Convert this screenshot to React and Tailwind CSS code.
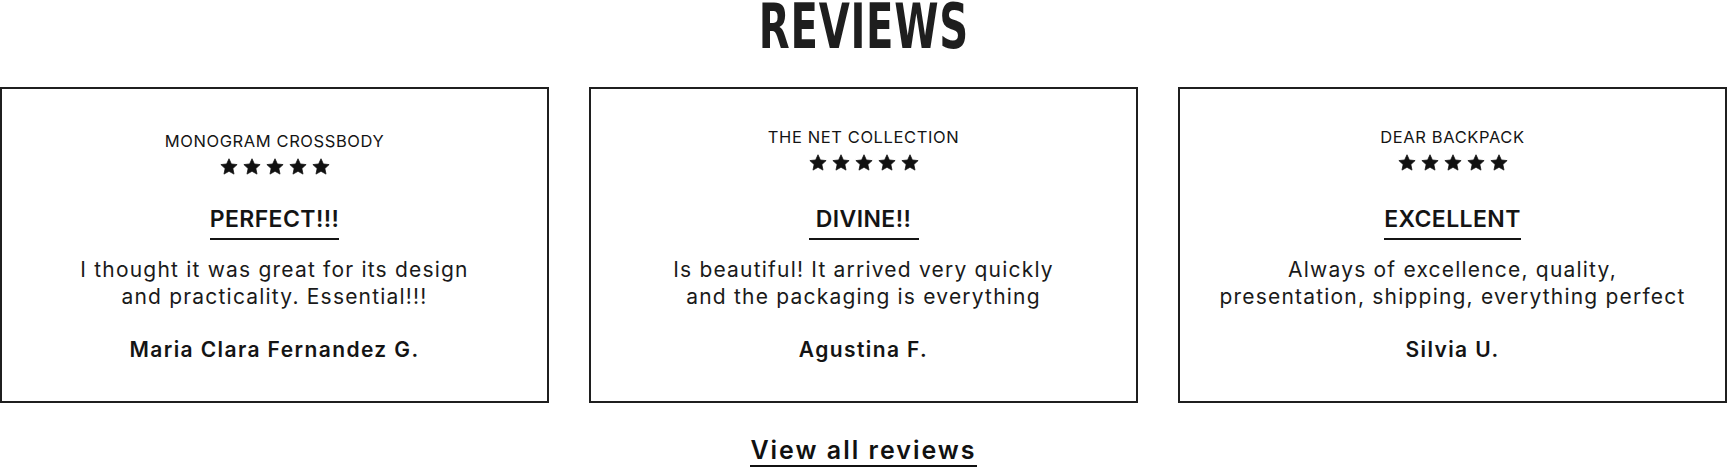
import React from "react";

const reviews = [
  {
    product: "MONOGRAM CROSSBODY",
    title: "PERFECT!!!",
    body: ["I thought it was great for its design", "and practicality. Essential!!!"],
    author: "Maria Clara Fernandez G.",
    first: true,
  },
  {
    product: "THE NET COLLECTION",
    title: "DIVINE!!",
    body: ["Is beautiful! It arrived very quickly", "and the packaging is everything"],
    author: "Agustina F.",
  },
  {
    product: "DEAR BACKPACK",
    title: "EXCELLENT",
    body: ["Always of excellence, quality,", "presentation, shipping, everything perfect"],
    author: "Silvia U.",
  },
];

function Star() {
  return (
    <svg width="18" height="17" viewBox="0 0 24 23" fill="#111" stroke="#111" strokeWidth="1" strokeLinejoin="round">
      <polygon points="12,1 15.23,8.05 23,8.9 17.23,14.2 18.8,21.8 12,18 5.2,21.8 6.77,14.2 1,8.9 8.77,8.05" />
    </svg>
  );
}

function Card({ r }) {
  return (
    <div className="flex flex-col items-center border-2 border-[#1f1f1f] h-[316px] text-[#141414]">
      <div className={`${r.first ? "mt-[42px]" : "mt-[38px]"} text-[16.5px] leading-[20px] tracking-[0.6px]`}>
        {r.product}
      </div>
      <div className="flex gap-[5px] mt-[7px]">
        <Star />
        <Star />
        <Star />
        <Star />
        <Star />
      </div>
      <div
        className={`${r.first ? "mt-[31px]" : "mt-[35px]"} min-w-[110px] text-center border-b-2 border-[#141414] pb-[6px] text-[23px] leading-[26px] font-semibold tracking-[0.4px]`}
      >
        {r.title}
      </div>
      <div className="mt-[16px] text-[21px] leading-[27px] text-center text-[#1a1a1a] tracking-[1.2px]">
        <div>{r.body[0]}</div>
        <div>{r.body[1]}</div>
      </div>
      <div className="mt-[27px] text-[21px] leading-[26px] font-semibold tracking-[1.4px]">{r.author}</div>
    </div>
  );
}

export default function App() {
  return (
    <div className="w-[1727px] h-[474px] bg-white overflow-hidden" style={{ fontFamily: "Inter, 'Noto Sans', sans-serif" }}>
      <div className="flex justify-center h-[87px]">
        <h2
          className="text-[62px] leading-[53px] font-bold text-[#1e1e1e] tracking-[1px] scale-x-[0.72]"
          style={{ fontFamily: "'DejaVu Sans Condensed', 'DejaVu Sans', sans-serif" }}
        >
          REVIEWS
        </h2>
      </div>
      <div className="grid grid-cols-3 gap-[40px]">
        {reviews.map((r) => (
          <Card key={r.title} r={r} />
        ))}
      </div>
      <div className="flex justify-center mt-[34px]">
        <a className="text-[25px] leading-[26px] font-semibold text-[#111] border-b-2 border-[#111] pb-[2px] tracking-[2px]">
          View all reviews
        </a>
      </div>
    </div>
  );
}
